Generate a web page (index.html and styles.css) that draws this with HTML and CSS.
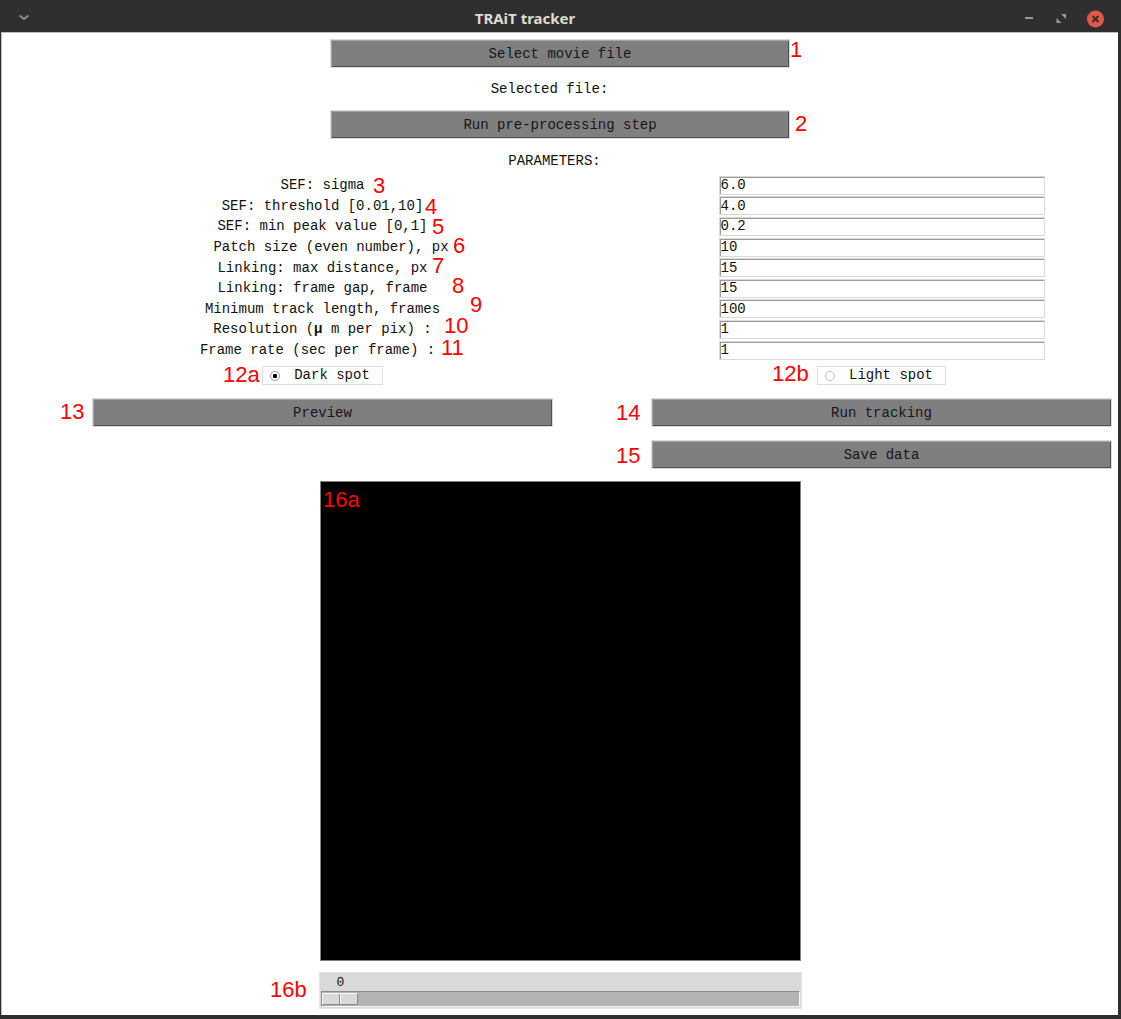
FILE: index.html
```html
<!DOCTYPE html>
<html lang="en">

<head>
    <meta charset="UTF-8">
    <meta name="viewport" content="width=device-width, initial-scale=1.0">
    <title>TRAiT tracker</title>
    <link rel="stylesheet" href="styles.css">
</head>

<body>
    <div class="window">
        <div class="titlebar">
            <span class="tb-menu">
                <svg width="40" height="32" viewBox="0 0 40 32">
                    <polyline points="19.5,15.5 24,19 28.5,15.5" fill="none" stroke="#8e8e8e" stroke-width="2" />
                </svg>
            </span>
            <span class="tb-title">TRAiT tracker</span>
            <span class="tb-controls">
                <svg width="111" height="32" viewBox="0 0 111 32">
                    <rect x="15" y="17" width="8" height="2" fill="#9a9a9a" />
                    <polygon points="51,14 56,14 56,19" fill="#9a9a9a" />
                    <polygon points="46.5,18 46.5,23 51.5,23" fill="#9a9a9a" />
                    <circle cx="85.5" cy="19" r="8.5" fill="#df5a4e" />
                    <path d="M82.5 16 L88.5 22 M88.5 16 L82.5 22" stroke="#3a2a28" stroke-width="1.8" />
                </svg>
            </span>
        </div>

        <div class="content">
            <!-- file selection -->
            <button class="btn btn-top first">Select movie file</button>
            <p class="caption">Selected file:</p>
            <button class="btn btn-top">Run pre-processing step</button>
            <p class="heading">PARAMETERS:</p>

            <!-- tracking parameters -->
            <div class="grid params">
                <label>SEF: sigma</label><input type="text" value="6.0">
                <label>SEF: threshold [0.01,10]</label><input type="text" value="4.0">
                <label>SEF: min peak value [0,1]</label><input type="text" value="0.2">
                <label class="push-right">Patch size (even number), px</label><input type="text" value="10">
                <label>Linking: max distance, px</label><input type="text" value="15">
                <label>Linking: frame gap, frame</label><input type="text" value="15">
                <label>Minimum track length, frames</label><input type="text" value="100">
                <label>Resolution (<span class="mu">&micro;</span>m per pix) :</label><input type="text" value="1">
                <label class="push-left">Frame rate (sec per frame) :</label><input type="text" value="1">
            </div>

            <div class="grid radios">
                <span class="radio"><span class="dot on"></span>Dark spot</span>
                <span class="radio"><span class="dot"></span>Light spot</span>
            </div>

            <div class="grid actions">
                <button class="btn">Preview</button>
                <button class="btn">Run tracking</button>
                <button class="btn col2">Save data</button>
            </div>

            <!-- preview area -->
            <div class="canvas"></div>
            <div class="scale">
                <div class="scale-value">0</div>
                <div class="trough"><span class="slider"></span></div>
            </div>
        </div>

        <!-- red annotation numbers -->
        <span class="note n1">1</span>
        <span class="note n2">2</span>
        <span class="note n3">3</span>
        <span class="note n4">4</span>
        <span class="note n5">5</span>
        <span class="note n6">6</span>
        <span class="note n7">7</span>
        <span class="note n8">8</span>
        <span class="note n9">9</span>
        <span class="note n10">10</span>
        <span class="note n11">11</span>
        <span class="note n12a">12a</span>
        <span class="note n12b">12b</span>
        <span class="note n13">13</span>
        <span class="note n14">14</span>
        <span class="note n15">15</span>
        <span class="note n16a">16a</span>
        <span class="note n16b">16b</span>
    </div>
</body>

</html>
```

FILE: styles.css
```css
/* window frame */
body {
    margin: 0;
    background: #2f2f2f;
}

.window {
    position: relative;
    width: 1121px;
    height: 1019px;
    background: #2f2f2f;
    font-family: "Liberation Mono", monospace;
    font-size: 14px;
    color: #111;
}

.titlebar {
    display: flex;
    height: 32px;
}

.tb-menu {
    width: 40px;
}

.tb-title {
    width: 970px;
    padding-top: 8px;
    text-align: center;
    font-family: "Noto Sans", sans-serif;
    font-weight: 700;
    font-size: 15px;
    line-height: 20px;
    color: #dfdbd2;
}

.tb-controls svg,
.tb-menu svg {
    display: block;
}

.content {
    box-sizing: border-box;
    height: 983px;
    margin: 0 3px 0 1px;
    background: #fff;
    border-top: 1px solid #bdbdbd;
    border-left: 1px solid #bdbdbd;
}

/* tk style buttons */
.btn {
    display: block;
    box-sizing: border-box;
    height: 29px;
    margin: 0;
    padding: 0;
    background: #7f7f7f;
    border: 1px solid #dadada;
    box-shadow: inset 1px 1px 0 #a4a4a4, inset -1px -1px 0 #505050;
    font: inherit;
    color: #161616;
}

.btn-top {
    width: 460px;
    margin: 0 auto;
}

.btn-top.first {
    margin-top: 6px;
}

.caption {
    margin: 0;
    height: 42px;
    padding-right: 21px;
    line-height: 42px;
    text-align: center;
}

.heading {
    margin: 0;
    padding: 12px 11px 4px 0;
    line-height: 20px;
    text-align: center;
}

.grid {
    display: grid;
    grid-template-columns: 461px 461px;
    column-gap: 98px;
    padding-left: 90px;
}

.params {
    grid-auto-rows: 20.6px;
    align-items: center;
}

.params label {
    justify-self: center;
    white-space: pre;
    line-height: 20px;
}

.params .push-right {
    margin-left: 17px;
}

.params .push-left {
    margin-right: 10px;
}

.mu {
    display: inline-block;
    width: 2ch;
    font-weight: 700;
}

.params input {
    justify-self: center;
    box-sizing: border-box;
    width: 326px;
    height: 19px;
    margin: 0;
    padding: 0 0 0 1px;
    border: 1px solid #d9d9d9;
    box-shadow: inset 1px 1px 0 #9c9c9c;
    background: #fff;
    font: inherit;
    color: #111;
    outline: none;
}

.radios {
    padding-top: 6px;
}

.radio {
    justify-self: center;
    display: flex;
    align-items: center;
    box-sizing: border-box;
    height: 19px;
    padding: 0 12px 0 7px;
    border: 1px solid #dcdcdc;
    line-height: 17px;
}

.dot {
    box-sizing: border-box;
    width: 10px;
    height: 10px;
    margin-right: 14px;
    border: 1px solid #bcbcbc;
    border-radius: 50%;
    background: #fff;
}

.dot.on {
    border-color: #9a9a9a;
    background: radial-gradient(circle, #000 0 2px, #fff 2.5px);
}

.actions {
    margin-top: 13px;
    grid-auto-rows: 29px;
    row-gap: 13px;
}

.col2 {
    grid-column: 2;
}

/* preview canvas and frame slider */
.canvas {
    box-sizing: border-box;
    width: 481px;
    height: 480px;
    margin: 12px auto 0;
    background: #000;
    border: 1px solid #808080;
}

.scale {
    box-sizing: border-box;
    width: 483px;
    height: 37px;
    margin: 11px auto 0;
    padding: 0 1px 1px;
    background: #d9d9d9;
    border: 1px solid #e4e4e4;
}

.scale-value {
    height: 18px;
    line-height: 20px;
    padding-left: 16px;
    font-size: 13px;
}

.trough {
    box-sizing: border-box;
    height: 16px;
    padding: 1px 0;
    background: #b3b3b3;
    border: 1px solid;
    border-color: #8c8c8c #f4f4f4 #f4f4f4 #8c8c8c;
}

.slider {
    position: relative;
    display: block;
    box-sizing: border-box;
    width: 36px;
    height: 100%;
    background: #d9d9d9;
    border: 1px solid;
    border-color: #fafafa #8a8a8a #8a8a8a #fafafa;
}

.slider::after {
    content: "";
    position: absolute;
    top: 0;
    bottom: 0;
    left: 16px;
    width: 1px;
    background: #8a8a8a;
    box-shadow: 1px 0 0 #fafafa;
}

/* annotation numbers */
.note {
    position: absolute;
    font-family: "Liberation Sans", Arial, sans-serif;
    font-size: 22px;
    line-height: 20px;
    color: #ff0000;
}

.n1 { left: 790px; top: 40px; }
.n2 { left: 795px; top: 114px; }
.n3 { left: 373px; top: 176px; }
.n4 { left: 425px; top: 197px; }
.n5 { left: 432px; top: 217px; }
.n6 { left: 453px; top: 236px; }
.n7 { left: 432px; top: 256px; }
.n8 { left: 452px; top: 276px; }
.n9 { left: 470px; top: 295px; }
.n10 { left: 444px; top: 316px; }
.n11 { left: 441px; top: 338px; }
.n12a { left: 223px; top: 365px; }
.n12b { left: 772px; top: 364px; }
.n13 { left: 60px; top: 402px; }
.n14 { left: 616px; top: 403px; }
.n15 { left: 616px; top: 446px; }
.n16a { left: 323px; top: 490px; }
.n16b { left: 270px; top: 980px; }
```
